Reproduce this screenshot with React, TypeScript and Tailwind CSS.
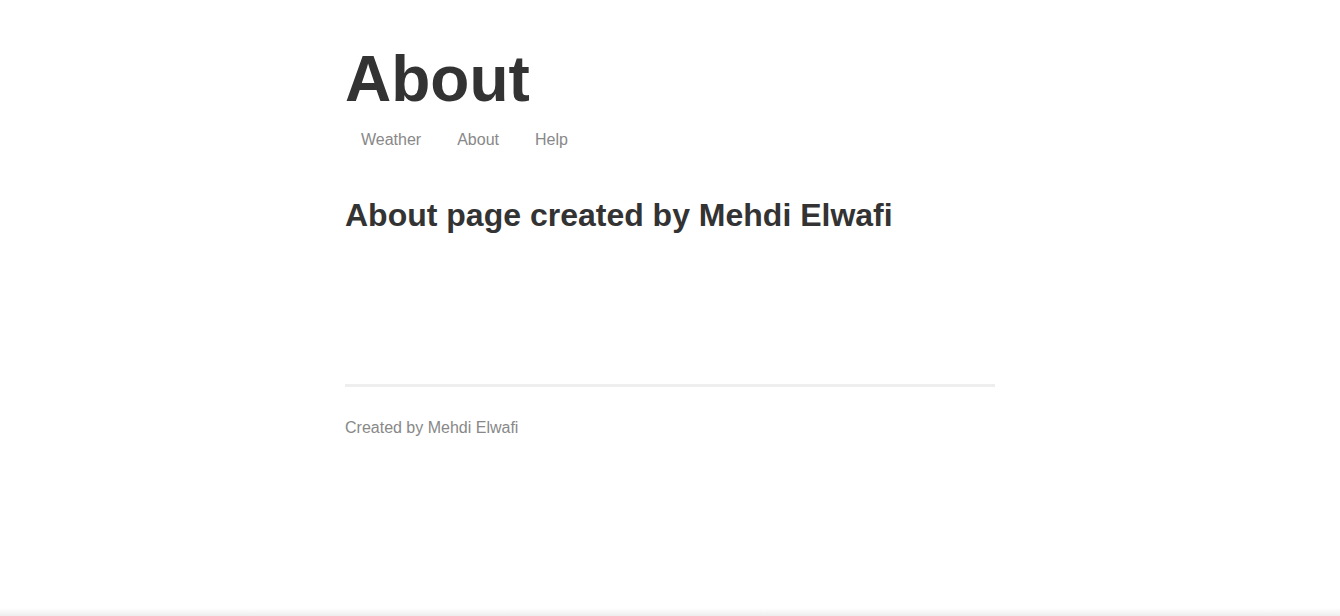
export default function App() {
  const links = ["Weather", "About", "Help"];

  return (
    <div className="flex min-h-[616px] flex-col bg-white font-['Liberation_Sans',Arial,sans-serif]">
      <div className="mx-auto w-[650px] flex-1">
        <h1 className="pt-[47px] text-[64px] font-bold leading-[64px] text-[#333]">About</h1>

        <nav className="mt-[17px] flex gap-[36px] pl-4 text-base leading-6 text-[#888]">
          {links.map((label) => (
            <a key={label} href="#" className="hover:text-[#333]">
              {label}
            </a>
          ))}
        </nav>

        <h2 className="mt-[43px] text-[32px] font-bold leading-10 text-[#333]">
          About page created by Mehdi Elwafi
        </h2>

        {/* footer */}
        <footer className="mt-[149px] border-t-[3px] border-[#eee]">
          <p className="mt-[29px] text-base leading-6 text-[#888]">Created by Mehdi Elwafi</p>
        </footer>
      </div>
      <div className="h-[8px] bg-gradient-to-b from-white to-[#ededed]" />
    </div>
  );
}
